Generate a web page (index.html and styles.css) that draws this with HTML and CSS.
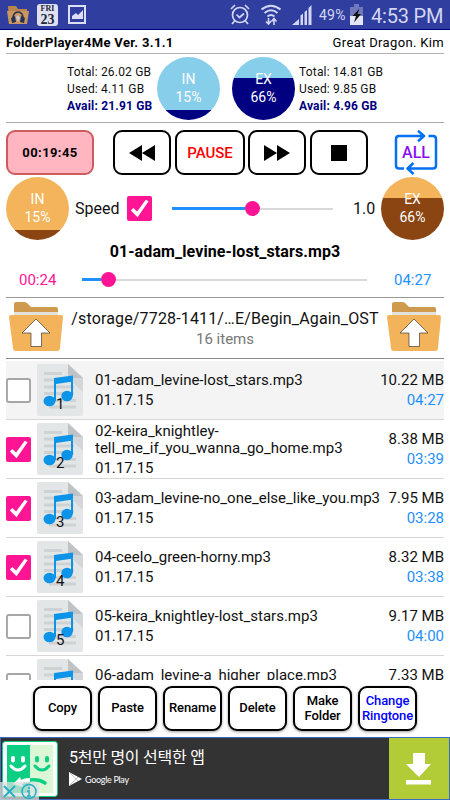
FILE: index.html
```html
<!DOCTYPE html>
<html lang="en">
<head>
    <meta charset="UTF-8">
    <title>FolderPlayer4Me</title>
    <link rel="stylesheet" href="styles.css">
</head>
<body>
    <svg width="0" height="0" class="symbols">
        <symbol id="check" viewBox="0 0 26 26">
            <rect width="26" height="26" rx="2" fill="#ff1493"/>
            <path d="M4 15l2.500-2.500 4 3.500L19.500 4l3 1.500L11 22z" fill="#fff"/>
        </symbol>
        <symbol id="uncheck" viewBox="0 0 26 26">
            <rect x="1" y="1" width="24" height="24" rx="2" fill="#fff" stroke="#a6a6a6" stroke-width="2"/>
        </symbol>
        <symbol id="music" viewBox="0 0 46 52">
            <path d="M2 0h29l15 14v36q0 2-2 2H2q-2 0-2-2V2q0-2 2-2z" fill="#e2e6e7"/>
            <path d="M7 9.500h18M7 16h27M7 23h30M7 29.500h30M7 36.500h32M12 43h27" stroke="#cfd2d4" stroke-width="3"/>
            <path d="M31 14h15v14z" fill="#d3d7d9"/>
            <path d="M31 0l15 14H33q-2 0-2-2z" fill="#c0c3c5"/>
            <path d="M17 14l19-2.500v6L19 20V37h-2zM34 13h2v19h-2z" fill="#0c94e8"/>
            <ellipse cx="12.500" cy="37" rx="6" ry="5.200" fill="#0c94e8"/>
            <ellipse cx="30" cy="32" rx="5.700" ry="5.200" fill="#0c94e8"/>
        </symbol>
        <symbol id="folder-up" viewBox="0 0 54 50">
            <path d="M5 14V3q0-2 2-2h8q2 0 3 1l4 4h25q2 0 2 2v6z" fill="#cf994e"/>
            <path d="M5 11h44v4H5z" fill="#e2e2dc"/>
            <path d="M2 14h50q2 0 2 2l-3 31q0 3-3 3H7q-3 0-3-3L0 16q0-2 2-2z" fill="#f3b35b"/>
            <path d="M27 18L13 32h9v13.500h10.500V32H41z" fill="#fff" stroke="#222" stroke-width=".6"/>
        </symbol>
    </svg>

    <div class="status-bar">
        <svg class="status-app" viewBox="0 0 22 20" width="22" height="20">
            <path d="M1 1h8l2 3h9v14H2z" fill="#b9854c"/>
            <path d="M0 6h22l-2 13H2z" fill="#c99561"/>
            <path d="M6 14Q6 7 11 7t5 7" fill="none" stroke="#263252" stroke-width="1.500"/>
            <path d="M4 13l4-2 1 6-4 1zM18 13l-4-2-1 6 4 1z" fill="#263252"/>
            <path d="M9 12l2-2 2 3-2 4z" fill="#c8cad6"/>
        </svg>
        <div class="status-date"><span>FRI</span><b>23</b></div>
        <svg class="status-chart" viewBox="0 0 18 19" width="18" height="19">
            <rect x="1" y="1" width="16" height="17" fill="#303f9f" stroke="#dcdff3" stroke-width="2"/>
            <path d="M4 14V11l4-3 2 2 5-5v9z" fill="#dcdff3"/>
        </svg>
        <div class="status-right">
            <svg class="s-alarm" viewBox="0 0 20 21" width="20" height="21" fill="none" stroke="#d2d6f2" stroke-width="1.700">
                <circle cx="10" cy="11" r="7.500"/>
                <path d="M6.500 10.500l3 3 4.500-4M1 5l4-4M19 5l-4-4M4.500 17L2 20M15.500 17l2.500 3"/>
            </svg>
            <svg class="s-wifi" viewBox="0 0 20 22" width="20" height="22" fill="none" stroke="#d2d6f2" stroke-width="2">
                <path d="M.5 5.500Q10-2 19.500 5.500M3.500 9Q10 3.500 16.500 9M6.500 12.500q3.500-3 7 0"/>
                <path d="M7.500 14v6M5 17.500l2.500 2.500 2.500-3M13 21v-6M10.500 17.500l2.500-3 2.500 3" stroke-width="1.600"/>
            </svg>
            <svg class="s-signal" viewBox="0 0 20 20" width="20" height="20" fill="#d2d6f2">
                <path d="M0 20l7-6v6zM8.500 10.500l2.500-2V20H8.500zM12.500 7L15 5v15h-2.500zM16.500 3L19.500 0v20h-3z"/>
            </svg>
            <span class="s-percent">49%</span>
            <svg class="s-battery" viewBox="0 0 13 21" width="13" height="21">
                <path d="M4 0h5v3h4v18H0V3h4z" fill="#7079bd"/>
                <path d="M0 12h13v9H0z" fill="#e4e6f7"/>
                <path d="M9.500 4.500L2.500 12H6l-2 6.500 7-8.500H7.500z" fill="#111"/>
            </svg>
            <span class="s-clock">4:53 PM</span>
        </div>
    </div>

    <header class="header">
        <b>FolderPlayer4Me Ver. 3.1.1</b>
        <span>Great Dragon. Kim</span>
    </header>

    <section class="storage">
        <div class="info info-in">
            <div>Total: 26.02 GB</div>
            <div>Used: 4.11 GB</div>
            <div class="avail">Avail: 21.91 GB</div>
        </div>
        <div class="gauge blue in"><span>IN</span><span>15%</span></div>
        <div class="gauge blue ex"><span>EX</span><span>66%</span></div>
        <div class="info info-ex">
            <div>Total: 14.81 GB</div>
            <div>Used: 9.85 GB</div>
            <div class="avail">Avail: 4.96 GB</div>
        </div>
    </section>

    <section class="controls">
        <button class="timer">00:19:45</button>
        <button class="btn rewind"><svg viewBox="0 0 26 18" width="26" height="18"><path d="M0 9L13 1v16zM13 9L26 1v16z"/></svg></button>
        <button class="btn pause">PAUSE</button>
        <button class="btn forward"><svg viewBox="0 0 26 18" width="26" height="18"><path d="M0 1l13 8L0 17zM13 1l13 8-13 8z"/></svg></button>
        <button class="btn stop"><svg viewBox="0 0 16 16" width="16" height="16"><path d="M0 0h16v16H0z"/></svg></button>
        <div class="repeat">
            <svg viewBox="0 0 44 45" width="44" height="45" fill="none" stroke="#0670f5" stroke-width="2.500" stroke-linejoin="round">
                <path d="M10 38.500H5q-3 0-3-3V9q0-3 3-3h24M24 .7L30 6l-6 5.300M34.500 6H39q3 0 3 3v26.500q0 3-3 3H14M19.500 33l-6 5.500 6 5.500"/>
            </svg>
            <span>ALL</span>
        </div>
    </section>

    <section class="speed">
        <div class="gauge orange in"><span>IN</span><span>15%</span></div>
        <span class="speed-label">Speed</span>
        <svg class="box"><use href="#check"/></svg>
        <div class="slider speed-slider"><div class="fill"></div><div class="thumb"></div><div class="rest"></div></div>
        <span class="speed-value">1.0</span>
        <div class="gauge orange ex"><span>EX</span><span>66%</span></div>
    </section>

    <div class="song">01-adam_levine-lost_stars.mp3</div>
    <section class="progress">
        <span class="elapsed">00:24</span>
        <div class="slider progress-slider"><div class="fill"></div><div class="thumb"></div><div class="rest"></div></div>
        <span class="total">04:27</span>
    </section>

    <section class="path">
        <svg class="folder"><use href="#folder-up"/></svg>
        <div class="path-text">
            <div class="dir">/storage/7728-1411/…E/Begin_Again_OST</div>
            <div class="count">16 items</div>
        </div>
        <svg class="folder"><use href="#folder-up"/></svg>
    </section>

    <ul class="list">
        <li class="current">
            <svg class="box"><use href="#uncheck"/></svg>
            <div class="file-icon"><svg><use href="#music"/></svg><span>1</span></div>
            <div class="name">01-adam_levine-lost_stars.mp3<div class="date">01.17.15</div></div>
            <div class="size">10.22 MB<div class="time">04:27</div></div>
        </li>
        <li>
            <svg class="box"><use href="#check"/></svg>
            <div class="file-icon"><svg><use href="#music"/></svg><span>2</span></div>
            <div class="name">02-keira_knightley-<br>tell_me_if_you_wanna_go_home.mp3<div class="date">01.17.15</div></div>
            <div class="size">8.38 MB<div class="time">03:39</div></div>
        </li>
        <li>
            <svg class="box"><use href="#check"/></svg>
            <div class="file-icon"><svg><use href="#music"/></svg><span>3</span></div>
            <div class="name">03-adam_levine-no_one_else_like_you.mp3<div class="date">01.17.15</div></div>
            <div class="size">7.95 MB<div class="time">03:28</div></div>
        </li>
        <li>
            <svg class="box"><use href="#check"/></svg>
            <div class="file-icon"><svg><use href="#music"/></svg><span>4</span></div>
            <div class="name">04-ceelo_green-horny.mp3<div class="date">01.17.15</div></div>
            <div class="size">8.32 MB<div class="time">03:38</div></div>
        </li>
        <li>
            <svg class="box"><use href="#uncheck"/></svg>
            <div class="file-icon"><svg><use href="#music"/></svg><span>5</span></div>
            <div class="name">05-keira_knightley-lost_stars.mp3<div class="date">01.17.15</div></div>
            <div class="size">9.17 MB<div class="time">04:00</div></div>
        </li>
        <li>
            <svg class="box"><use href="#uncheck"/></svg>
            <div class="file-icon"><svg><use href="#music"/></svg></div>
            <div class="name">06-adam_levine-a_higher_place.mp3<div class="date">&nbsp;</div></div>
            <div class="size">7.33 MB<div class="time">&nbsp;</div></div>
        </li>
    </ul>

    <nav class="actions">
        <button>Copy</button>
        <button>Paste</button>
        <button>Rename</button>
        <button>Delete</button>
        <button>Make<br>Folder</button>
        <button class="ringtone">Change<br>Ringtone</button>
    </nav>

    <footer class="ad">
        <div class="ad-icon">
            <svg viewBox="0 0 56 56" width="56" height="56">
                <rect x=".5" y=".5" width="55" height="55" rx="3" fill="#fff" stroke="#0dcf83"/>
                <path d="M5 4h23v48H5z" fill="#0dcf83"/>
                <path d="M28 4h23v48H28z" fill="#dbf7d5"/>
                <path d="M11 17v2.500M21 17v2.500" stroke="#fff" stroke-width="4" stroke-linecap="round"/>
                <path d="M9 25q7 8 14 0" fill="none" stroke="#fff" stroke-width="3" stroke-linecap="round"/>
                <path d="M35 17v2.500M45 17v2.500" stroke="#0dcf83" stroke-width="4" stroke-linecap="round"/>
                <path d="M33 25q7 8 14 0" fill="none" stroke="#0dcf83" stroke-width="3" stroke-linecap="round"/>
                <path d="M28 39q9-1 15 3" fill="none" stroke="#0dcf83" stroke-width="3.500" stroke-linecap="round"/>
                <path d="M28 37q-6 0-9 2l-1-3-7 7 10 3-1-3q4-2 8-2z" fill="#fff"/>
            </svg>
            <svg class="ad-choices" viewBox="0 0 39 18" width="39" height="18">
                <path d="M0 0h39v18H0z" fill="#d9dfdf" fill-opacity=".75"/>
                <path d="M4 4l11 11M15 4L4 15" stroke="#25afc4" stroke-width="1.800"/>
                <circle cx="29" cy="9.500" r="7" fill="none" stroke="#25afc4" stroke-width="1.600"/>
                <path d="M29 5v2M27 9h2v5M27 14h4" fill="none" stroke="#25afc4" stroke-width="1.500"/>
            </svg>
        </div>
        <div class="ad-text">
            <div class="ad-title">5천만 명이 선택한 앱</div>
            <div class="ad-store">
                <svg viewBox="0 0 13 14" width="13" height="14"><path d="M0 0l13 7-13 7z" fill="#fff"/><path d="M1 1l8 8M1 13l8-8" stroke="#999" stroke-width=".6"/></svg>
                <span>Google Play</span>
            </div>
        </div>
        <div class="ad-download">
            <svg viewBox="0 0 26 32" width="26" height="32" fill="#fff"><path d="M7 0h12v11h6L13 24 0 11h7zM0 27h25v4.500H0z"/></svg>
        </div>
    </footer>
</body>
</html>
```
FILE: styles.css
```css
* { box-sizing: border-box; }
body { margin: 0; width: 450px; height: 800px; overflow: hidden; background: #fff; color: #111; font-family: Roboto, "Noto Sans CJK KR", sans-serif; }
button { padding: 0; margin: 0; font-family: inherit; background: #fff; }
svg { display: block; flex: none; }
.symbols { display: none; }

.status-bar { display: flex; align-items: center; height: 30px; padding-left: 7px; background: #303f9f; border-bottom: 1px solid #000080; color: #d2d6f2; }
.status-date { display: flex; flex-direction: column; align-items: center; width: 21px; height: 22px; margin: 0 10px 0 8px; background: #dfe1f2; border-radius: 3px; color: #222636; font-family: "Liberation Serif", serif; font-weight: bold; }
.status-date span { font-size: 8px; line-height: 9px; }
.status-date b { font-size: 14px; line-height: 13px; }
.status-right { display: flex; align-items: center; margin-left: auto; padding-right: 8px; white-space: nowrap; }
.s-wifi { margin-left: 11px; }
.s-signal { margin-left: 11px; }
.s-percent { width: 28px; margin-left: 7px; font-size: 14px; letter-spacing: .2px; }
.s-battery { margin-left: 3px; }
.s-clock { width: 71px; margin-left: 8px; padding-top: 2px; font-size: 20px; letter-spacing: -.2px; }

.header { display: flex; justify-content: space-between; align-items: center; height: 24px; margin: 0 6px; padding-top: 2px; border-bottom: 1px solid #b0b0b0; font-size: 13px; letter-spacing: .34px; white-space: nowrap; color: #000; }

.storage { display: flex; height: 69px; margin: 0 6px; padding-top: 3px; border-bottom: 1px solid #aaa; }
.info { font-size: 12px; line-height: 17px; padding-top: 7px; letter-spacing: .18px; white-space: nowrap; }
.info-in { width: 90px; margin-left: 61px; }
.info-ex { margin-left: 4px; }
.avail { color: #000080; font-weight: bold; }
.gauge { display: flex; flex-direction: column; align-items: center; flex: none; width: 63px; height: 63px; padding-top: 13px; border-radius: 50%; color: #fff; font-size: 14px; line-height: 18px; }
.storage .ex { margin-left: 12px; }
.blue.in { background: linear-gradient(#87ceeb 53px, #000080 53px); }
.blue.ex { background: linear-gradient(#87ceeb 21px, #000080 21px); }
.orange.in { background: linear-gradient(#f3b45c 53px, #8b4513 53px); }
.orange.ex { background: linear-gradient(#f3b45c 21px, #8b4513 21px); }

.controls { display: flex; align-items: center; margin: 7px 6px 0; height: 45px; }
.controls button { display: flex; align-items: center; justify-content: center; height: 45px; border: 2px solid #000; border-radius: 9px; }
.controls .timer { width: 88px; margin-right: 19px; background: #ffb6c1; border-color: #cd5c5c; font-size: 13px; font-weight: bold; letter-spacing: .4px; }
.controls .rewind, .controls .forward, .controls .stop { width: 58px; }
.controls .pause { width: 70px; margin: 0 3px 0 4px; color: #f00; font-size: 15px; font-weight: 500; }
.controls .stop { margin-left: 4px; }
.repeat { display: grid; place-items: center; width: 44px; margin-left: 26px; color: #8a0df0; font-size: 16px; font-weight: 500; }
.repeat svg, .repeat span { grid-area: 1 / 1; }

.speed { display: flex; align-items: center; height: 63px; margin: 2px 6px 0; font-size: 16px; }
.speed-label { width: 52px; margin-left: 6px; }
.box { width: 25px; height: 25px; flex: none; }
.slider { display: flex; align-items: center; flex: none; height: 15px; }
.slider .fill { height: 3px; background: #1e90ff; }
.slider .rest { flex: 1; height: 2px; background: #d9d9d9; }
.slider .thumb { width: 15px; height: 15px; border-radius: 50%; background: #ff1493; }
.speed-slider { width: 161px; margin-left: 20px; }
.speed-slider .fill { width: 73px; }
.speed-value { width: 28px; margin-left: 20px; }

.song { height: 22px; line-height: 23px; text-align: center; font-size: 16px; font-weight: bold; letter-spacing: .1px; color: #000; }
.progress { display: flex; align-items: center; height: 36px; margin: 0 6px; border-bottom: 1px solid #999; font-size: 15px; }
.elapsed { width: 63px; padding-left: 13px; color: #ff1493; }
.progress-slider { width: 285px; margin-left: 13px; }
.progress-slider .fill { width: 19px; }
.total { margin-left: 27px; color: #1e90ff; }

.path { display: flex; align-items: center; justify-content: space-between; height: 61px; margin: 0 6px; padding: 0 3px; border-bottom: 1px solid #888; }
.folder { width: 54px; height: 50px; margin-bottom: 5px; }
.path-text { padding-top: 1px; text-align: center; white-space: nowrap; }
.dir { font-size: 16px; line-height: 21px; letter-spacing: .15px; }
.count { font-size: 15px; line-height: 21px; color: #777; }

.list { height: 319px; margin: 2px 6px 0; padding: 0; overflow: hidden; list-style: none; font-size: 15px; line-height: 17px; }
.list li { display: flex; align-items: center; height: 59px; border-bottom: 1px solid #d6d6d6; white-space: nowrap; }
.list .current { background: #f4f4f4; }
.file-icon { position: relative; width: 46px; height: 52px; margin-left: 6px; }
.file-icon svg { width: 46px; height: 52px; }
.file-icon span { position: absolute; left: 19px; top: 32px; font-size: 15px; }
.name { margin-left: 12px; padding-top: 1px; }
.date, .time { margin-top: 3px; }
.size { margin-left: auto; padding-top: 1px; text-align: right; }
.time { color: #1e90ff; }

.actions { display: flex; gap: 6px; height: 57px; padding: 6px 0 0 33px; }
.actions button { width: 59px; height: 45px; border: 2px solid #000; border-radius: 9px; box-shadow: 0 1px 3px rgba(0,0,0,.4); font-size: 13px; line-height: 14.5px; font-weight: 500; letter-spacing: -.1px; color: #000; }
.actions .ringtone { color: #00f; }

.ad { display: flex; height: 63px; border: 1px solid #3b6bc4; background: #333; color: #fff; }
.ad-icon { position: relative; width: 58px; padding: 3px 0 0 1px; }
.ad-choices { position: absolute; left: -1px; bottom: -1px; }
.ad-text { padding: 9px 0 0 10px; }
.ad-title { font-size: 16px; line-height: 22px; letter-spacing: -.25px; }
.ad-store { display: flex; align-items: center; gap: 3px; margin-top: 3px; font-family: Lato, sans-serif; font-size: 9px; letter-spacing: -.3px; }
.ad-download { display: flex; align-items: center; justify-content: center; width: 60px; margin-left: auto; background: #b2cc37; }
```
